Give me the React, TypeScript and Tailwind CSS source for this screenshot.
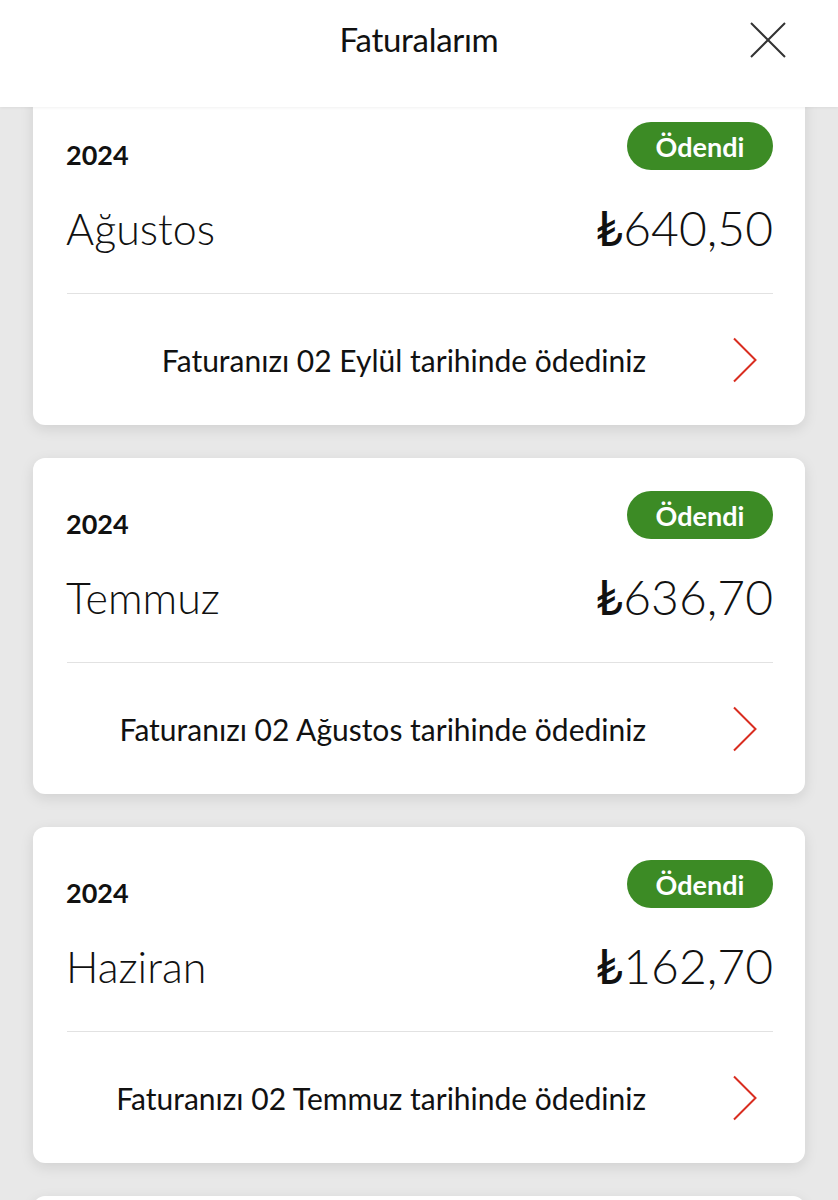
import React from "react";

const bills = [
  { year: "2024", month: "Ağustos", amount: "640,50", note: "Faturanızı 02 Eylül tarihinde ödediniz" },
  { year: "2024", month: "Temmuz", amount: "636,70", note: "Faturanızı 02 Ağustos tarihinde ödediniz" },
  { year: "2024", month: "Haziran", amount: "162,70", note: "Faturanızı 02 Temmuz tarihinde ödediniz" },
];

function Chevron() {
  return (
    <svg width="26" height="46" viewBox="0 0 26 46" fill="none" className="shrink-0">
      <path d="M2 1.5 L23.5 23 L2 44.5" stroke="#d92d20" strokeWidth="2" />
    </svg>
  );
}

function Card({ b, first }: { b: (typeof bills)[number]; first?: boolean }) {
  return (
    <div
      className={`bg-white rounded-[12px] shadow-[0_4px_14px_rgba(0,0,0,0.10)] pl-[34px] pr-[32px] pt-[33px] shrink-0 ${first ? "-mt-[18px]" : ""}`}
    >
      <div className="flex items-start justify-between h-[48px]">
        <div className="mt-[17px] text-[27px] leading-[32px] font-bold text-[#111] -ml-[1px]">{b.year}</div>
        <div className="h-[48px] w-[146px] rounded-full bg-[#3c8b25] flex items-center justify-center text-white text-[27px] font-bold leading-none">
          Ödendi
        </div>
      </div>
      <div className="mt-[26px] h-[64px] flex items-center justify-between">
        <div className="text-[43px] font-light text-[#111] leading-none -ml-[1px]">{b.month}</div>
        <div className="text-[48px] font-light text-[#111] leading-none flex items-center">
          <span className="font-normal">₺</span>
          <span>{b.amount}</span>
        </div>
      </div>
      <div className="mt-[33px] h-px bg-[#e2e2e2]" />
      <div className="h-[131px] flex items-center justify-end pr-[15px]">
        <div className="text-[30px] text-[#111] leading-none mr-[86px]">{b.note}</div>
        <Chevron />
      </div>
    </div>
  );
}

export default function App() {
  return (
    <div
      className="w-[838px] h-[1200px] bg-[#e8e8e8] flex flex-col overflow-hidden"
      style={{ fontFamily: "Lato, 'Noto Sans', 'DejaVu Sans', sans-serif" }}
    >
      <div className="h-[107px] bg-white shrink-0 relative z-10 flex items-center justify-center shadow-[0_1px_3px_rgba(0,0,0,0.06)]">
        <div className="text-[33px] text-[#111] -mt-[27px] tracking-[-0.3px]">Faturalarım</div>
        <svg className="absolute right-[52px] top-[22px]" width="36" height="36" viewBox="0 0 36 36" fill="none">
          <path d="M1 1 L35 35 M35 1 L1 35" stroke="#333" strokeWidth="2" />
        </svg>
      </div>
      <div className="flex flex-col gap-[33px] px-[33px]">
        {bills.map((b, i) => (
          <Card key={i} b={b} first={i === 0} />
        ))}
        <div className="bg-white rounded-[12px] h-[300px] shrink-0 shadow-[0_4px_14px_rgba(0,0,0,0.10)]" />
      </div>
    </div>
  );
}
